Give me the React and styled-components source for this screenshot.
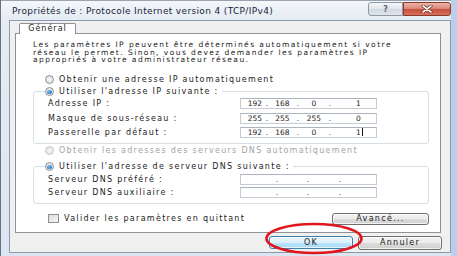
import React from 'react';
import styled, { createGlobalStyle, css } from 'styled-components';

const GlobalStyle = createGlobalStyle`
  html, body { margin: 0; padding: 0; }
  body {
    width: 457px;
    height: 256px;
    overflow: hidden;
    background: #c3d7ee;
    font-family: "DejaVu Sans", Verdana, sans-serif;
    color: #1b1b1b;
  }
`;

const uiText = css`
  font-size: 8px;
  letter-spacing: 1.3px;
  white-space: nowrap;
`;

const Screen = styled.div`
  width: 457px;
  height: 256px;
  overflow: hidden;
  display: flex;
  background: #b9cfea;
`;

const Window = styled.div`
  flex: none;
  width: 450px;
  height: 258px;
  border-left: 1px solid #6a7382;
  background: linear-gradient(180deg, #f5f8fb 0, #e6ecf3 18px, #dce5f0 100%);
  display: flex;
  flex-direction: column;
`;

const TitleBar = styled.div`
  height: 20px;
  display: flex;
  align-items: flex-start;
  border-top: 1px solid #9aa4b1;
  box-sizing: border-box;
`;

const Title = styled.div`
  padding: 4px 0 0 11px;
  font-size: 9px;
  line-height: 12px;
  letter-spacing: 0.35px;
  color: #17253a;
  white-space: nowrap;
`;

const Captions = styled.div`
  margin: 1px 0 0 auto;
  display: flex;
`;

const CaptionButton = styled.div`
  box-sizing: border-box;
  width: ${p => p.$w}px;
  height: 14px;
  display: flex;
  align-items: center;
  justify-content: center;
  border: 1px solid ${p => (p.$close ? '#8a3a2d' : '#8d98a8')};
  border-radius: ${p => (p.$close ? '0 3px 3px 0' : '3px 0 0 3px')};
  background: ${p =>
    p.$close
      ? 'linear-gradient(180deg, #ecb3a8 0%, #dc8a7a 45%, #c6503c 55%, #d7735f 100%)'
      : 'linear-gradient(180deg, #f4f6f9 0%, #e3e8ee 45%, #d2d9e2 55%, #dfe5ec 100%)'};
  color: #5a6475;
  font-size: 8px;
  font-weight: bold;
`;

const Client = styled.div`
  box-sizing: border-box;
  margin-left: 8px;
  width: 442px;
  height: 233px;
  border: 1px solid #8c99ad;
  background: #f0f0f0;
  padding: 2px 9px 0 5px;
  display: flex;
  flex-direction: column;
`;

const TabStrip = styled.div`
  height: 10px;
  padding-left: 4px;
  display: flex;
`;

const Tab = styled.div`
  position: relative;
  z-index: 1;
  box-sizing: border-box;
  width: 57px;
  height: 11px;
  border: 1px solid #8e9199;
  border-bottom: none;
  border-radius: 2px 2px 0 0;
  background: #fff;
  ${uiText};
  letter-spacing: 1px;
  line-height: 10px;
  text-align: center;
`;

const Panel = styled.div`
  box-sizing: border-box;
  height: 200px;
  border: 1px solid #8e9199;
  background: #fff;
  padding: 7px 11px 0 17px;
  display: flex;
  flex-direction: column;
`;

const Intro = styled.p`
  margin: 0;
  font-size: 7.5px;
  line-height: 7.5px;
  letter-spacing: 1.45px;
  white-space: nowrap;
`;

const OptionRow = styled.div`
  height: 12px;
  margin-top: ${p => p.$top || 0}px;
  padding-left: ${p => (p.$legend ? 0 : 12)}px;
  display: flex;
  align-items: center;
  gap: 5px;
  ${uiText};
  color: ${p => (p.$disabled ? '#a3a3a3' : '#1b1b1b')};
`;

const Radio = styled.span`
  box-sizing: border-box;
  flex: none;
  width: 9px;
  height: 9px;
  border-radius: 50%;
  border: 1px solid ${p => (p.$disabled ? '#c6c6c6' : '#8a8f97')};
  background: radial-gradient(circle at 50% 50%, #f6f6f6 0, #dcdcdc 100%);
  display: flex;
  align-items: center;
  justify-content: center;
  &::after {
    content: '';
    display: ${p => (p.$checked ? 'block' : 'none')};
    width: 5px;
    height: 4px;
    border-radius: 50%;
    background: radial-gradient(circle at 40% 35%, #6fc3f3 0, #1d6fbd 70%, #144f8e 100%);
  }
`;

const Group = styled.fieldset`
  margin: ${p => p.$top || 0}px 0 0 0;
  padding: 0 0 4px 0;
  min-width: 0;
  border: 1px solid #d5dfe5;
  border-radius: 3px;
`;

const Legend = styled.legend`
  margin-left: 11px;
  padding: 0 3px 0 0;
`;

const FieldGrid = styled.div`
  display: grid;
  grid-template-columns: 192px 137px;
  grid-auto-rows: 12px;
  row-gap: ${p => p.$gap}px;
  padding: ${p => p.$top}px 0 0 14px;
  align-items: center;
`;

const FieldLabel = styled.span`
  ${uiText};
`;

const IpBox = styled.div`
  box-sizing: border-box;
  height: 11px;
  border: 1px solid #c5ccd5;
  border-top-color: #aab3be;
  background: #fff;
  padding-left: ${p => (p.$empty ? 14 : 4)}px;
  display: grid;
  grid-template-columns: 20px 4px 27px 4px 28px 4px 1fr;
  align-items: center;
  font-size: 7.5px;
  line-height: 9px;
  text-align: center;
`;

const Octet = styled.span`
  white-space: nowrap;
  text-align: ${p => (p.$last ? 'left' : 'center')};
  padding-left: ${p => (p.$last ? 24 : 0)}px;
`;

const Caret = styled.span`
  display: inline-block;
  width: 1px;
  height: 8px;
  margin-left: 1px;
  vertical-align: -1px;
  background: #111;
`;

const FooterRow = styled.div`
  margin-top: 9px;
  height: 12px;
  padding-left: 15px;
  display: flex;
  align-items: center;
  gap: 5px;
  ${uiText};
`;

const CheckBox = styled.span`
  box-sizing: border-box;
  width: 11px;
  height: 9px;
  border: 1px solid #8f8f8f;
  background: linear-gradient(135deg, #dcdcdc 0, #f7f7f7 100%);
`;

const PushButton = styled.button`
  box-sizing: border-box;
  flex: none;
  width: ${p => p.$w}px;
  height: ${p => p.$h}px;
  margin: 0 0 0 ${p => (p.$push ? 'auto' : '0')};
  padding: 0;
  border: 1px solid ${p => (p.$default ? '#3c7fb1' : '#707070')};
  border-radius: 3px;
  background: ${p =>
    p.$default
      ? 'linear-gradient(180deg, #eaf6fd 0%, #d9f0fc 50%, #bee6fd 51%, #a7d9f5 100%)'
      : 'linear-gradient(180deg, #f2f2f2 0%, #ebebeb 50%, #dddddd 51%, #cfcfcf 100%)'};
  box-shadow: inset 0 0 0 1px rgba(255, 255, 255, 0.7);
  font-family: inherit;
  ${uiText};
  line-height: 10px;
  color: #1b1b1b;
`;

const ButtonRow = styled.div`
  margin: 3px -1px 0 0;
  display: flex;
  justify-content: flex-end;
  align-items: flex-start;
  gap: 5px;
`;

const Highlight = styled.div`
  position: relative;
  display: flex;
`;

const Ellipse = styled.svg`
  position: absolute;
  left: -5px;
  top: -14px;
  overflow: visible;
  pointer-events: none;
`;

const IpField = ({ value, caret }) => {
  const parts = value ? value.split('.') : ['', '', '', ''];
  return (
    <IpBox $empty={!value}>
      <Octet>{parts[0]}</Octet>
      <span>.</span>
      <Octet>{parts[1]}</Octet>
      <span>.</span>
      <Octet>{parts[2]}</Octet>
      <span>.</span>
      <Octet $last>
        {parts[3]}
        {caret && <Caret />}
      </Octet>
    </IpBox>
  );
};

const Option = ({ children, checked, disabled, top, legend }) => (
  <OptionRow $top={top} $disabled={disabled} $legend={legend}>
    <Radio $checked={checked} $disabled={disabled} />
    {children}
  </OptionRow>
);

export default function App() {
  return (
    <>
      <GlobalStyle />
      <Screen>
        <Window>
          <TitleBar>
            <Title>Propriétés de : Protocole Internet version 4 (TCP/IPv4)</Title>
            <Captions>
              <CaptionButton $w={35}>?</CaptionButton>
              <CaptionButton $w={48} $close>
                <svg width="12" height="8" viewBox="0 0 12 8">
                  <path d="M2 1 L10 7 M10 1 L2 7" stroke="#5b2118" strokeWidth="3" strokeLinecap="round" />
                  <path d="M2 1 L10 7 M10 1 L2 7" stroke="#fff" strokeWidth="1.6" strokeLinecap="round" />
                </svg>
              </CaptionButton>
            </Captions>
          </TitleBar>

          <Client>
            <TabStrip>
              <Tab>Général</Tab>
            </TabStrip>
            <Panel>
              <Intro>
                Les paramètres IP peuvent être déterminés automatiquement si votre
                <br />
                réseau le permet. Sinon, vous devez demander les paramètres IP
                <br />
                appropriés à votre administrateur réseau.
              </Intro>

              <Option top={10}>Obtenir une adresse IP automatiquement</Option>

              <Group>
                <Legend>
                  <Option checked legend>Utiliser l'adresse IP suivante :</Option>
                </Legend>
                <FieldGrid $gap={2.5} $top={0}>
                  <FieldLabel>Adresse IP :</FieldLabel>
                  <IpField value="192.168.0.1" />
                  <FieldLabel>Masque de sous-réseau :</FieldLabel>
                  <IpField value="255.255.255.0" />
                  <FieldLabel>Passerelle par défaut :</FieldLabel>
                  <IpField value="192.168.0.1" caret />
                </FieldGrid>
              </Group>

              <Option top={1} disabled>Obtenir les adresses des serveurs DNS automatiquement</Option>

              <Group $top={4}>
                <Legend>
                  <Option checked legend>Utiliser l'adresse de serveur DNS suivante :</Option>
                </Legend>
                <FieldGrid $gap={1} $top={1}>
                  <FieldLabel>Serveur DNS préféré :</FieldLabel>
                  <IpField />
                  <FieldLabel>Serveur DNS auxiliaire :</FieldLabel>
                  <IpField />
                </FieldGrid>
              </Group>

              <FooterRow>
                <CheckBox />
                Valider les paramètres en quittant
                <PushButton $w={97} $h={12} $push>Avancé...</PushButton>
              </FooterRow>
            </Panel>

            <ButtonRow>
              <Highlight>
                <PushButton $w={84} $h={13} $default>OK</PushButton>
                <Ellipse width="100" height="34" viewBox="0 0 100 34">
                  <ellipse cx="50" cy="16.5" rx="47.5" ry="14.5" fill="none" stroke="#e0161f" strokeWidth="2.6" />
                </Ellipse>
              </Highlight>
              <PushButton $w={84} $h={14}>Annuler</PushButton>
            </ButtonRow>
          </Client>
        </Window>
      </Screen>
    </>
  );
}
